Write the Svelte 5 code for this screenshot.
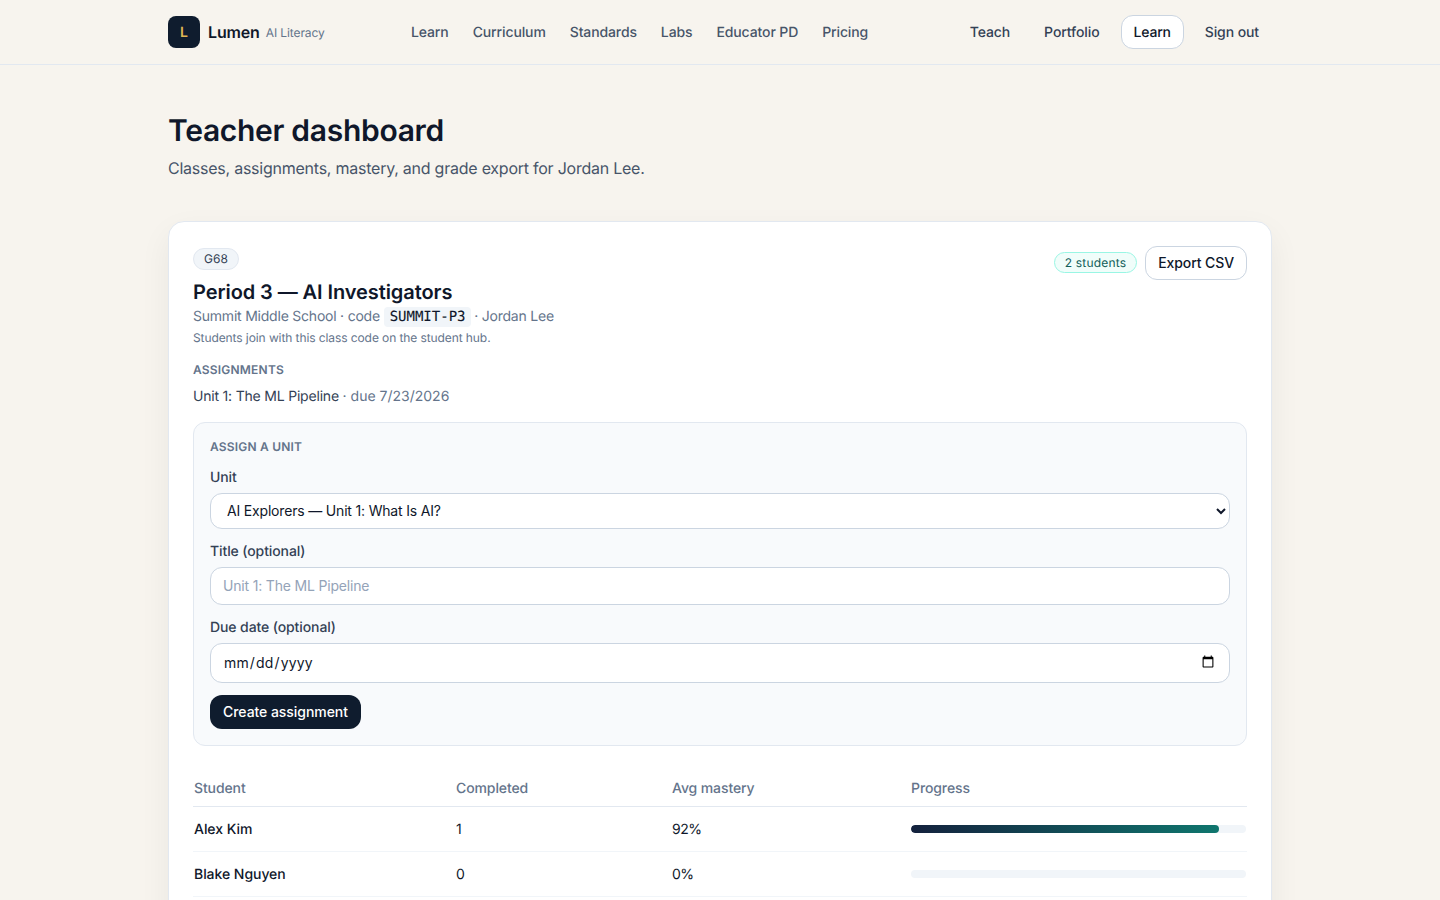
<script>
  const links = ['Learn', 'Curriculum', 'Standards', 'Labs', 'Educator PD', 'Pricing'];
  const students = [
    { name: 'Alex Kim', completed: 1, mastery: 92 },
    { name: 'Blake Nguyen', completed: 0, mastery: 0 }
  ];
</script>

<header class="topbar">
  <div class="topbar-inner">
    <a class="brand" href="#home">
      <span class="logo">L</span>
      <span class="brand-name">Lumen</span>
      <span class="brand-sub">AI Literacy</span>
    </a>
    <nav class="main-nav">
      {#each links as link}
        <a href="#{link}">{link}</a>
      {/each}
    </nav>
    <div class="user-nav">
      <a href="#teach">Teach</a>
      <a href="#portfolio">Portfolio</a>
      <a class="current" href="#learn">Learn</a>
      <a href="#signout">Sign out</a>
    </div>
  </div>
</header>

<main class="page">
  <h1>Teacher dashboard</h1>
  <p class="lead">Classes, assignments, mastery, and grade export for Jordan Lee.</p>

  <section class="card">
    <div class="card-head">
      <div>
        <span class="chip">G68</span>
        <h2>Period 3 — AI Investigators</h2>
        <p class="meta">Summit Middle School · code <code>SUMMIT-P3</code> · Jordan Lee</p>
        <p class="hint">Students join with this class code on the student hub.</p>
      </div>
      <div class="head-actions">
        <span class="count">2 students</span>
        <button class="ghost">Export CSV</button>
      </div>
    </div>

    <h3 class="eyebrow">Assignments</h3>
    <p class="assignment">Unit 1: The ML Pipeline <span>· due 7/23/2026</span></p>

    <form class="assign" onsubmit={(e) => e.preventDefault()}>
      <h3 class="eyebrow">Assign a unit</h3>
      <label class="field">
        <span>Unit</span>
        <select>
          <option>AI Explorers — Unit 1: What Is AI?</option>
        </select>
      </label>
      <label class="field">
        <span>Title (optional)</span>
        <input type="text" placeholder="Unit 1: The ML Pipeline" />
      </label>
      <label class="field">
        <span>Due date (optional)</span>
        <input type="date" />
      </label>
      <button class="primary" type="submit">Create assignment</button>
    </form>

    <table>
      <thead>
        <tr>
          <th class="c1">Student</th>
          <th class="c2">Completed</th>
          <th class="c3">Avg mastery</th>
          <th>Progress</th>
        </tr>
      </thead>
      <tbody>
        {#each students as s}
          <tr>
            <td class="name">{s.name}</td>
            <td>{s.completed}</td>
            <td>{s.mastery}%</td>
            <td>
              <div class="track"><div class="fill" style="width: {s.mastery}%"></div></div>
            </td>
          </tr>
        {/each}
      </tbody>
    </table>
  </section>
</main>

<style>
  :global(body) {
    background: #f7f4ee;
    color: #0f172a;
    font-family: Inter, "Noto Sans", sans-serif;
    text-rendering: geometricPrecision;
  }

  a {
    text-decoration: none;
    color: inherit;
  }

  .topbar {
    height: 64px;
    border-bottom: 1px solid #e2e8f0;
  }

  .topbar-inner {
    width: 1104px;
    height: 64px;
    margin: 0 auto;
    display: flex;
    align-items: center;
  }

  .brand {
    display: flex;
    align-items: center;
    width: 231px;
    flex: none;
  }

  .logo {
    width: 32px;
    height: 32px;
    border-radius: 8px;
    background: #0f1c2e;
    color: #e0b654;
    font-size: 14px;
    font-weight: 600;
    display: flex;
    align-items: center;
    justify-content: center;
  }

  .brand-name {
    margin-left: 8px;
    font-size: 16px;
    font-weight: 600;
    letter-spacing: -0.15px;
    color: #0f172a;
  }

  .brand-sub {
    margin-left: 6px;
    font-size: 12px;
    letter-spacing: -0.1px;
    color: #64748b;
  }

  .main-nav {
    display: flex;
    gap: 24px;
    font-size: 14px;
    font-weight: 500;
    letter-spacing: -0.12px;
    color: #475569;
    margin-left: 12px;
  }

  .user-nav {
    margin-left: auto;
    display: flex;
    align-items: center;
    gap: 8px;
    font-size: 14px;
    font-weight: 500;
    letter-spacing: -0.1px;
    color: #334155;
  }

  .user-nav a {
    padding: 9px 12px 7px;
    border: 1px solid transparent;
    border-radius: 12px;
    line-height: 16px;
  }

  .user-nav a.current {
    background: #fff;
    border-color: #cbd5e1;
    color: #0f172a;
    letter-spacing: -0.2px;
  }

  .page {
    width: 1104px;
    margin: 0 auto;
    padding-top: 48px;
    padding-bottom: 40px;
  }

  h1 {
    margin: 0;
    font-size: 30px;
    line-height: 36px;
    font-weight: 600;
    letter-spacing: -0.3px;
    color: #0f172a;
  }

  .lead {
    margin: 7px 0 0;
    font-size: 16px;
    line-height: 24px;
    letter-spacing: -0.24px;
    color: #475569;
  }

  .card {
    margin-top: 41px;
    background: #fff;
    border: 1px solid #e2e8f0;
    border-radius: 16px;
    padding: 24px;
    box-shadow: 0 12px 32px rgba(15, 23, 42, 0.06);
  }

  .card-head {
    display: flex;
    justify-content: space-between;
    align-items: flex-start;
  }

  .chip {
    display: inline-block;
    height: 22px;
    line-height: 20px;
    box-sizing: border-box;
    margin-top: 2px;
    padding: 0 10px;
    border: 1px solid #e2e8f0;
    border-radius: 999px;
    background: #f1f5f9;
    font-size: 12px;
    color: #334155;
    vertical-align: top;
  }

  h2 {
    margin: 8px 0 1px;
    font-size: 20px;
    line-height: 28px;
    font-weight: 600;
    letter-spacing: -0.08px;
    color: #0f172a;
  }

  .meta {
    margin: 0;
    font-size: 14px;
    line-height: 20px;
    letter-spacing: -0.22px;
    color: #64748b;
  }

  code {
    font-family: "DejaVu Sans Mono", monospace;
    font-size: 14px;
    letter-spacing: 0;
    color: #0f172a;
    -webkit-text-stroke: 0.12px #0f172a;
    background: #f1f5f9;
    border-radius: 4px;
    padding: 2px 6px;
    margin-right: -1px;
  }

  .hint {
    margin: 3px 0 0;
    font-size: 12px;
    line-height: 16px;
    letter-spacing: -0.09px;
    color: #64748b;
  }

  .head-actions {
    display: flex;
    align-items: center;
    gap: 8px;
  }

  .count {
    height: 21px;
    line-height: 19px;
    box-sizing: border-box;
    padding: 0 10px;
    border: 1px solid #99f6e4;
    border-radius: 999px;
    background: #f0fdfa;
    font-size: 12px;
    letter-spacing: 0.2px;
    color: #115e59;
    margin-top: -1px;
    margin-bottom: 1px;
  }

  button {
    font-family: inherit;
    font-size: 14px;
    font-weight: 500;
    letter-spacing: -0.1px;
    height: 34px;
    border-radius: 12px;
    padding: 0 12px 2px;
  }

  .ghost {
    background: #fff;
    border: 1px solid #cbd5e1;
    color: #0f172a;
  }

  .eyebrow {
    margin: 16px 0 0;
    font-size: 12px;
    line-height: 16px;
    font-weight: 600;
    letter-spacing: 0.2px;
    text-transform: uppercase;
    color: #64748b;
  }

  .assignment {
    margin: 9px 0 0;
    font-size: 14px;
    line-height: 20px;
    letter-spacing: -0.2px;
    color: #334155;
  }

  .assignment span {
    color: #64748b;
    letter-spacing: 0;
  }

  .assign {
    margin-top: 15px;
    background: #f8fafc;
    border: 1px solid #e2e8f0;
    border-radius: 12px;
    padding: 16px;
  }

  .assign .eyebrow {
    margin: 0;
  }

  .field {
    display: block;
    margin-top: 12px;
  }

  .field span {
    display: block;
    font-size: 14px;
    line-height: 20px;
    font-weight: 500;
    letter-spacing: -0.1px;
    color: #334155;
    padding-top: 1px;
    margin-bottom: 5px;
  }

  select,
  input {
    display: block;
    width: 100%;
    box-sizing: border-box;
    background: #fff;
    border: 1px solid #cbd5e1;
    border-radius: 12px;
    font-family: inherit;
    font-size: 14px;
    letter-spacing: -0.18px;
    color: #0f172a;
    outline: none;
  }

  select {
    height: 36px;
    padding: 0 12px 2px;
  }

  input[type="text"] {
    height: 38px;
    padding: 0 12px 2px;
  }

  input[type="text"]::placeholder {
    color: #94a3b8;
  }

  input[type="date"] {
    height: 40px;
    padding: 7px 12px 9px;
    letter-spacing: 0.15px;
  }

  .primary {
    display: block;
    margin-top: 12px;
    background: #0f1c2e;
    border: none;
    color: #fff;
    padding: 0 13px 2px;
    letter-spacing: -0.05px;
  }

  table {
    width: 100%;
    margin-top: 24px;
    border-collapse: collapse;
    table-layout: fixed;
    font-size: 14px;
  }

  th {
    text-align: left;
    font-weight: 500;
    letter-spacing: -0.1px;
    color: #64748b;
    padding: 9px 1px 7px;
    line-height: 20px;
    border-bottom: 1px solid #e2e8f0;
  }

  .c1 {
    width: 260px;
  }

  .c2 {
    width: 214px;
  }

  .c3 {
    width: 237px;
  }

  td {
    padding: 13px 1px 11px;
    line-height: 20px;
    letter-spacing: -0.5px;
    color: #0f172a;
    border-bottom: 1px solid #f1f5f9;
  }

  .name {
    font-weight: 500;
    letter-spacing: -0.05px;
  }

  .track {
    height: 8px;
    margin-top: -1px;
    margin-bottom: 1px;
    border-radius: 999px;
    background: #f1f5f9;
    overflow: hidden;
  }

  .fill {
    height: 100%;
    border-radius: 999px;
    background: linear-gradient(90deg, #14213d, #0f766e);
  }
</style>
